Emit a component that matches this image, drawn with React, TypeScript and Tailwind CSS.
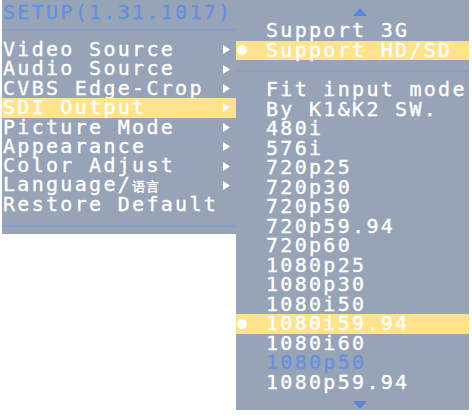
import React from "react";

const mono =
  "font-['DejaVu_Sans_Mono','Liberation_Mono',monospace] text-[20px] tracking-[2.3px] [-webkit-text-stroke:0.35px_currentColor]";

const leftItems: { label: React.ReactNode; arrow: boolean; active?: boolean }[] = [
  { label: "Video Source", arrow: true },
  { label: "Audio Source", arrow: true },
  { label: "CVBS Edge-Crop", arrow: true },
  { label: "SDI Output", arrow: true, active: true },
  { label: "Picture Mode", arrow: true },
  { label: "Appearance", arrow: true },
  { label: "Color Adjust", arrow: true },
  {
    label: (
      <>
        Language/
        <span className="font-['Noto_Sans_CJK_SC',sans-serif] text-[13px] tracking-[1px]">语言</span>
      </>
    ),
    arrow: true,
  },
  { label: "Restore Default", arrow: false },
];

const modes = [
  "480i",
  "576i",
  "720p25",
  "720p30",
  "720p50",
  "720p59.94",
  "720p60",
  "1080p25",
  "1080p30",
  "1080i50",
  "1080i59.94",
  "1080i60",
  "1080p50",
  "1080p59.94",
];

const Dots = () => (
  <div className="h-[2px] w-full bg-[repeating-linear-gradient(90deg,#7d99d3_0_1px,transparent_1px_2px)]" />
);

const Arrow = () => (
  <svg width="7" height="9" viewBox="0 0 7 9" className="shrink-0">
    <path d="M0 0 L7 4.5 L0 9 Z" fill="#ffffff" />
  </svg>
);

const Bullet = () => <span className="h-[10px] w-[10px] rounded-full bg-white" />;

const Row = ({
  children,
  active,
  bullet,
  color = "text-white",
}: {
  children: React.ReactNode;
  active?: boolean;
  bullet?: boolean;
  color?: string;
}) => (
  <div
    className={`flex h-[19.5px] items-center whitespace-nowrap leading-[19.5px] ${
      active ? "bg-[#fee38c]" : ""
    }`}
  >
    <span className="flex w-[30px] items-center pl-[1px]">{bullet && <Bullet />}</span>
    <span className={color}>{children}</span>
  </div>
);

export default function App() {
  return (
    <div className="flex h-[416px] w-[472px] items-start bg-white pl-[2px]">
      {/* main menu */}
      <div className={`flex h-[234px] w-[234px] flex-col bg-[#97a3b7] ${mono}`}>
        <div className="h-[29px] pl-[1px] pt-[2px] leading-[20px] text-[#6690e0]">SETUP(1.31.1017)</div>
        <Dots />
        <div className="mt-[9px] flex flex-col">
          {leftItems.map((item, i) => (
            <div
              key={i}
              className={`flex h-[19.4px] items-center justify-between whitespace-nowrap pl-[1px] pr-[6px] leading-[19.4px] text-white ${
                item.active ? "bg-[#fee38c]" : ""
              }`}
            >
              <span>{item.label}</span>
              {item.arrow && <Arrow />}
            </div>
          ))}
        </div>
        <div className="mt-[10px]">
          <Dots />
        </div>
      </div>

      {/* sub menu */}
      <div className={`flex h-[410px] w-[233px] flex-col bg-[#97a3b7] ${mono}`}>
        <div className="flex h-[21px] justify-center pl-[15px] pt-[8px]">
          <svg width="14" height="8" viewBox="0 0 14 8">
            <path d="M7 0 L14 8 L0 8 Z" fill="#5b86d8" />
          </svg>
        </div>
        <Row>Support 3G</Row>
        <Row active bullet>
          Support HD/SD
        </Row>
        <div className="mt-[10px]">
          <Dots />
        </div>
        <div className="mt-[8px] flex flex-col">
          <Row>Fit input mode</Row>
          <Row>By K1&amp;K2 SW.</Row>
          {modes.map((m) => (
            <Row
              key={m}
              active={m === "1080i59.94"}
              bullet={m === "1080i59.94"}
              color={m === "1080p50" ? "text-[#6690e0]" : "text-white"}
            >
              {m}
            </Row>
          ))}
        </div>
        <div className="flex justify-center pl-[15px] pt-[9px]">
          <svg width="14" height="8" viewBox="0 0 14 8">
            <path d="M0 0 L14 0 L7 8 Z" fill="#5b86d8" />
          </svg>
        </div>
      </div>
    </div>
  );
}
